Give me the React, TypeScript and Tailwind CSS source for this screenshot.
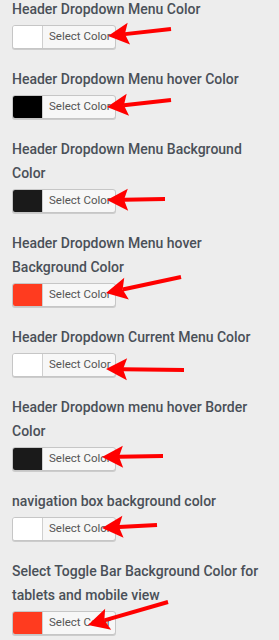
import React from "react";

type Item = { label: string; color: string };

const items: Item[] = [
  { label: "Header Dropdown Menu Color", color: "#ffffff" },
  { label: "Header Dropdown Menu hover Color", color: "#000000" },
  { label: "Header Dropdown Menu Background Color", color: "#1a1a1a" },
  { label: "Header Dropdown Menu hover Background Color", color: "#ff3b1f" },
  { label: "Header Dropdown Current Menu Color", color: "#ffffff" },
  { label: "Header Dropdown menu hover Border Color", color: "#1a1a1a" },
  { label: "navigation box background color", color: "#ffffff" },
  { label: "Select Toggle Bar Background Color for tablets and mobile view", color: "#ff3b1f" },
];

const arrows: [number, number, number, number][] = [
  [171, 29, 108, 36],
  [171, 100, 107, 107],
  [165, 199, 107, 200],
  [181, 277, 106, 293],
  [184, 370, 106, 369],
  [163, 456, 102, 457],
  [157, 525, 102, 528],
  [168, 602, 88, 625],
];

function arrowPath(x1: number, y1: number, x2: number, y2: number) {
  const dx = x2 - x1;
  const dy = y2 - y1;
  const len = Math.hypot(dx, dy);
  const ux = dx / len;
  const uy = dy / len;
  const px = -uy;
  const py = ux;
  const hl = 21;
  const hw = 11;
  const bx = x2 - ux * hl;
  const by = y2 - uy * hl;
  const head = `M${x2},${y2} L${bx + px * hw},${by + py * hw} L${bx + ux * 4},${by + uy * 4} L${bx - px * hw},${by - py * hw} Z`;
  return { line: `M${x1},${y1} L${bx + ux * 4},${by + uy * 4}`, head };
}

export default function App() {
  return (
    <div
      className="relative w-[279px] h-[640px] overflow-hidden bg-[#ededed] text-[#4a5058]"
      style={{ fontFamily: "Roboto, 'Liberation Sans', Arial, sans-serif" }}
    >
      <div className="flex flex-col gap-[18px] px-3 mt-[-3px]">
        {items.map((it, i) => (
          <div key={i} className="flex flex-col gap-1">
            <div className="text-[14px] leading-6 font-medium">{it.label}</div>
            <div className="flex h-6 w-[104px] overflow-hidden rounded-[3px] border border-[#c6c6c6] bg-[#f7f7f7] shadow-[0_1px_0_#cccccc]">
              <div className="w-[30px] h-full border-r border-[#cfcfcf]" style={{ backgroundColor: it.color }} />
              <div className="flex items-center pl-[6px] text-[11.5px] text-[#555555]">Select Color</div>
            </div>
          </div>
        ))}
      </div>
      <svg className="pointer-events-none absolute left-0 top-0" width={279} height={640}>
        {arrows.map(([x1, y1, x2, y2], i) => {
          const a = arrowPath(x1, y1, x2, y2);
          return (
            <g key={i}>
              <path d={a.line} stroke="#ff0000" strokeWidth={4} fill="none" />
              <path d={a.head} fill="#ff0000" />
            </g>
          );
        })}
      </svg>
    </div>
  );
}
